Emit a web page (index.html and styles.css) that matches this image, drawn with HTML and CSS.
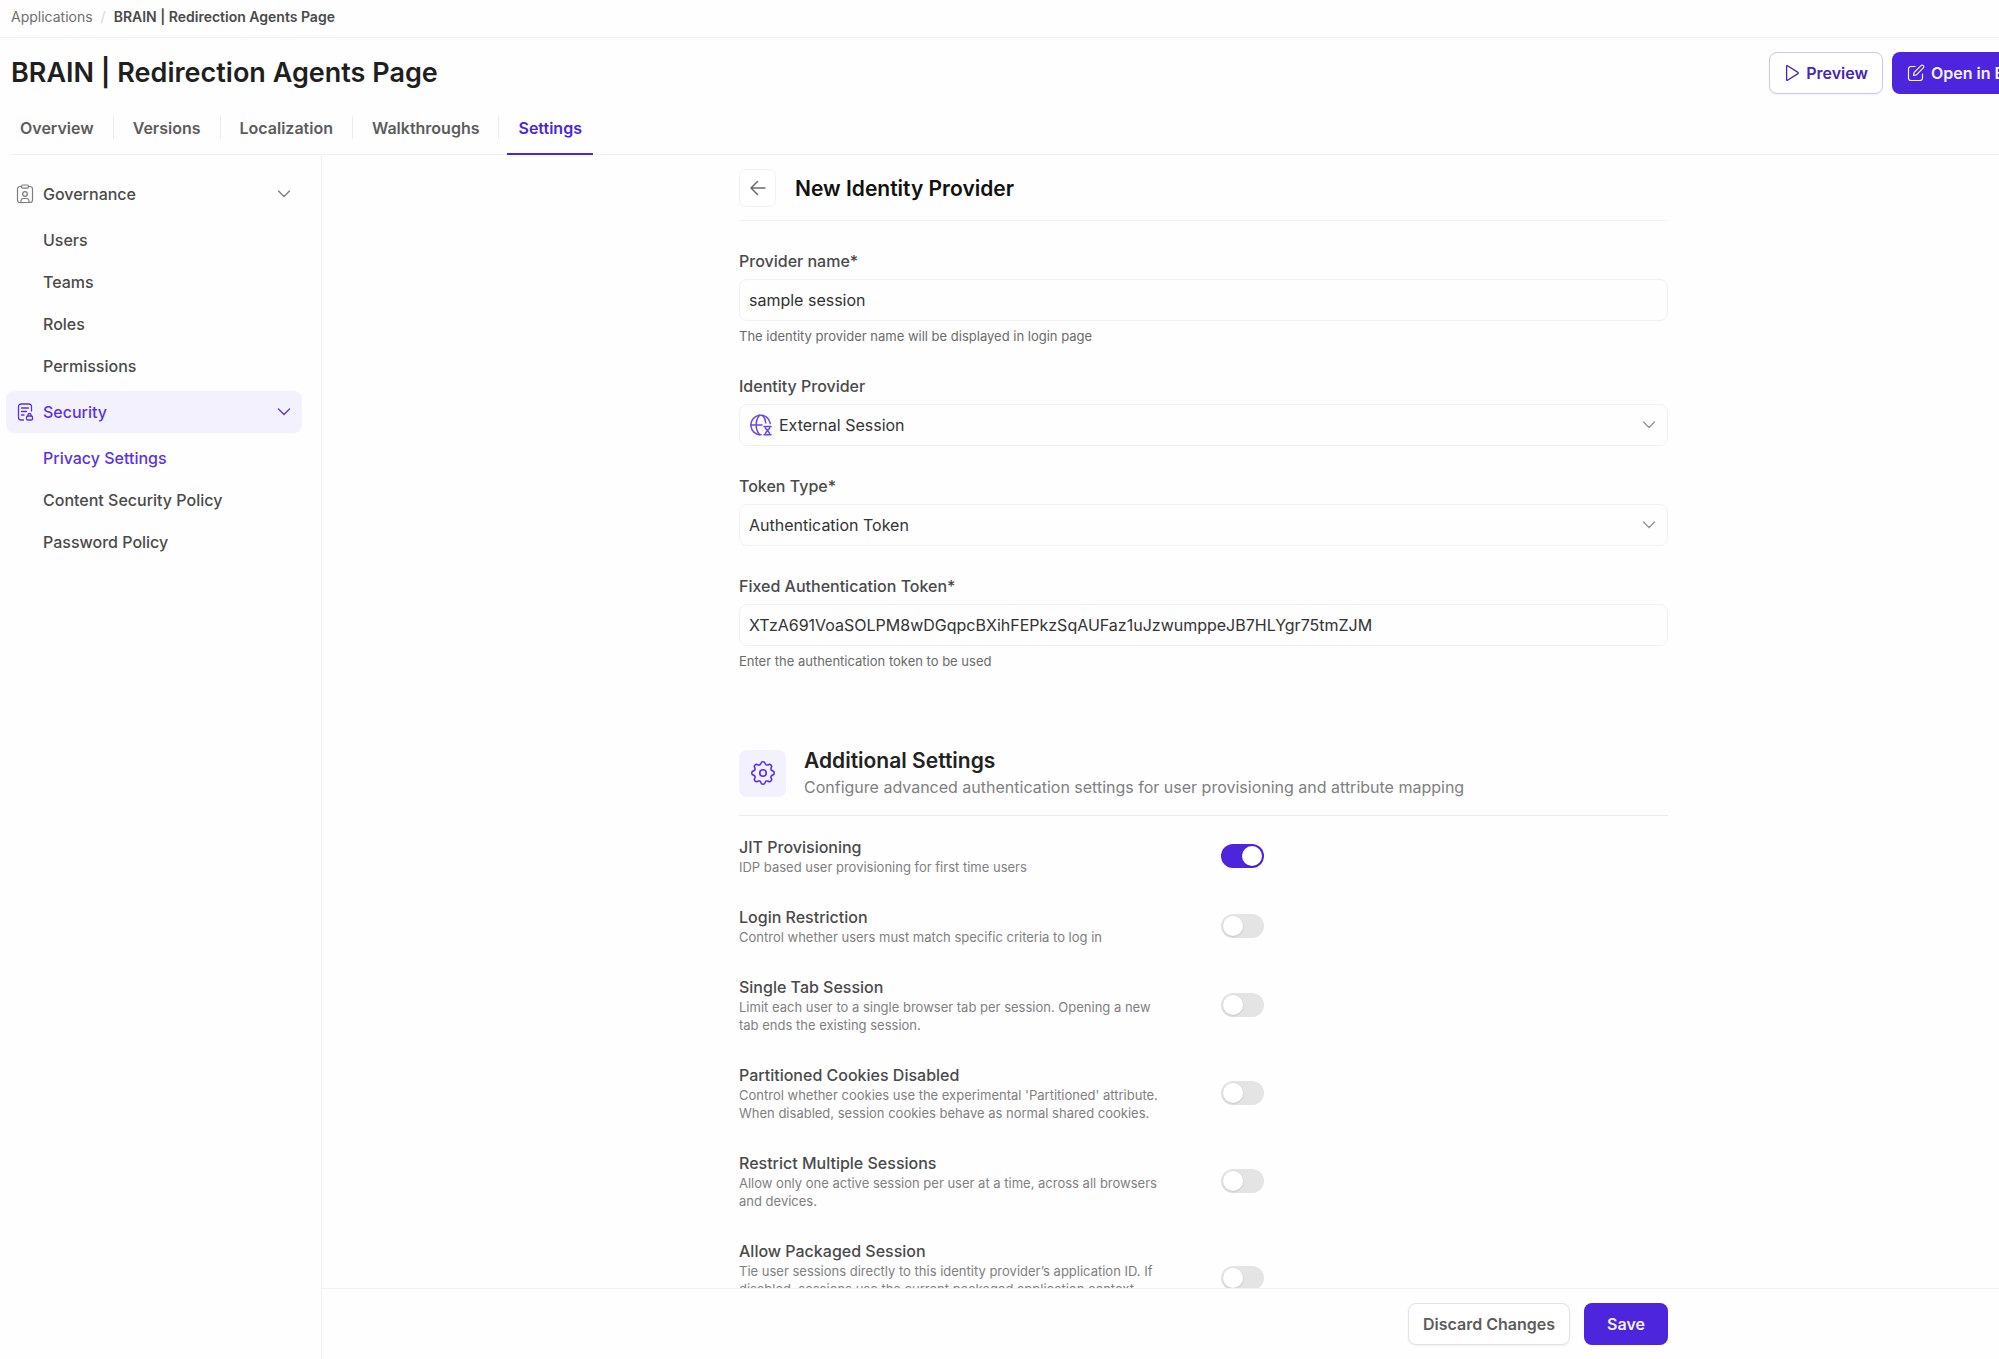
FILE: index.html
```html
<!DOCTYPE html>
<html lang="en">
<head>
    <meta charset="UTF-8">
    <meta name="viewport" content="width=device-width, initial-scale=1.0">
    <title>BRAIN | Redirection Agents Page</title>
    <link rel="stylesheet" href="styles.css">
</head>
<body>
    <div class="app">
        <nav class="breadcrumb" aria-label="Breadcrumb">
            <a href="#">Applications</a>
            <span class="slash">/</span>
            <strong>BRAIN | Redirection Agents Page</strong>
        </nav>

        <header class="page-header">
            <div class="title-row">
                <h1>BRAIN | Redirection Agents Page</h1>
                <div class="actions">
                    <button type="button" class="btn btn-outline">
                        <svg width="16" height="18" viewBox="0 0 16 18" fill="none" stroke="currentColor" stroke-width="1.3" stroke-linejoin="round"><path d="M2.6 2.2v13.6c0 .5.5.7.9.5L14 9.6c.4-.3.4-.9 0-1.2L3.5 1.7c-.4-.2-.9 0-.9.5z"/></svg>
                        Preview
                    </button>
                    <button type="button" class="btn btn-primary">
                        <svg width="18" height="18" viewBox="0 0 18 18" fill="none" stroke="currentColor" stroke-width="1.2" stroke-linecap="round" stroke-linejoin="round"><path d="M8 2.500H4A2.500 2.500 0 0 0 1.500 5v9A2.500 2.500 0 0 0 4 16.500h9a2.500 2.500 0 0 0 2.500-2.500v-4"/><path d="M6.500 11.500l.6-3L14 1.600a1.500 1.500 0 0 1 2.300 2.300L9.400 10.900z"/></svg>
                        Open in Builder
                    </button>
                </div>
            </div>
            <nav class="tabs">
                <a href="#">Overview</a>
                <a href="#">Versions</a>
                <a href="#">Localization</a>
                <a href="#">Walkthroughs</a>
                <a href="#" class="active">Settings</a>
            </nav>
        </header>

        <div class="content">
            <aside class="sidebar">
                <button type="button" class="group">
                    <svg width="18" height="20" viewBox="0 0 18 20" fill="none" stroke="currentColor" stroke-width="1.2" stroke-linecap="round" stroke-linejoin="round"><path d="M5.500 2.500H4A2.500 2.500 0 0 0 1.500 5v11A2.500 2.500 0 0 0 4 18.500h10a2.500 2.500 0 0 0 2.500-2.500V5A2.500 2.500 0 0 0 14 2.500h-1.500"/><rect x="5.500" y="1" width="7" height="3.200" rx="1.400"/><circle cx="9" cy="10" r="2.300"/><path d="M5 18v-1.500a2.500 2.500 0 0 1 2.500-2h3a2.500 2.500 0 0 1 2.500 2V18"/></svg>
                    <span>Governance</span>
                    <svg class="chevron" width="14" height="8" viewBox="0 0 14 8" fill="none" stroke="currentColor" stroke-width="1.3" stroke-linecap="round" stroke-linejoin="round"><path d="M1.500 1L7 6.500 12.500 1"/></svg>
                </button>
                <ul>
                    <li><a href="#">Users</a></li>
                    <li><a href="#">Teams</a></li>
                    <li><a href="#">Roles</a></li>
                    <li><a href="#">Permissions</a></li>
                </ul>
                <button type="button" class="group active">
                    <svg width="18" height="20" viewBox="0 0 18 20" fill="none" stroke="currentColor" stroke-width="1.3" stroke-linecap="round" stroke-linejoin="round"><path d="M15.500 9V4.500A2.500 2.500 0 0 0 13 2H5a2.500 2.500 0 0 0-2.500 2.500v11A2.500 2.500 0 0 0 5 18h2.500"/><path d="M5.500 6h7M5.500 9.500h5M5.500 13h2.500"/><rect x="10.500" y="14" width="6" height="4" rx="1.200"/><path d="M12 14v-1a1.500 1.500 0 0 1 3 0v1"/></svg>
                    <span>Security</span>
                    <svg class="chevron" width="14" height="8" viewBox="0 0 14 8" fill="none" stroke="currentColor" stroke-width="1.3" stroke-linecap="round" stroke-linejoin="round"><path d="M1.500 1L7 6.500 12.500 1"/></svg>
                </button>
                <ul>
                    <li><a href="#" class="active">Privacy Settings</a></li>
                    <li><a href="#">Content Security Policy</a></li>
                    <li><a href="#">Password Policy</a></li>
                </ul>
            </aside>

            <main class="main">
                <form class="scroll" id="providerForm">
                    <div class="column">
                        <div class="form-head">
                            <button type="button" class="back" aria-label="Back">
                                <svg width="18" height="16" viewBox="0 0 18 16" fill="none" stroke="currentColor" stroke-width="1.5" stroke-linecap="round" stroke-linejoin="round"><path d="M16 8H2M8.500 1.500L2 8l6.500 6.500"/></svg>
                            </button>
                            <h2>New Identity Provider</h2>
                        </div>

                        <div class="field">
                            <label for="providerName">Provider name*</label>
                            <input type="text" id="providerName" value="sample session">
                            <p class="hint">The identity provider name will be displayed in login page</p>
                        </div>
                        <div class="field">
                            <label for="identityProvider">Identity Provider</label>
                            <div class="select with-icon">
                                <svg class="lead" width="22" height="22" viewBox="0 0 22 22" fill="none" stroke="currentColor" stroke-width="1.5" stroke-linecap="round" stroke-linejoin="round"><path d="M20.300 9.500A9.800 9.800 0 1 0 11 20.800"/><path d="M1.200 11H12"/><path d="M9.500 1.300C5 7 5 15 9.500 20.700M12.500 1.300c2 2.300 3 4.700 3.300 7.700"/><path d="M14 12.500h7M14 20.800h7M15 12.500c0 3.800 5 4.500 5 8.300M20 12.500c0 3.800-5 4.500-5 8.300"/></svg>
                                <select id="identityProvider">
                                    <option>External Session</option>
                                </select>
                                <svg class="chevron" width="14" height="8" viewBox="0 0 14 8" fill="none" stroke="currentColor" stroke-width="1.5" stroke-linecap="round" stroke-linejoin="round"><path d="M1.500 1L7 6.500 12.500 1"/></svg>
                            </div>
                        </div>
                        <div class="field">
                            <label for="tokenType">Token Type*</label>
                            <div class="select">
                                <select id="tokenType">
                                    <option>Authentication Token</option>
                                </select>
                                <svg class="chevron" width="14" height="8" viewBox="0 0 14 8" fill="none" stroke="currentColor" stroke-width="1.5" stroke-linecap="round" stroke-linejoin="round"><path d="M1.500 1L7 6.500 12.500 1"/></svg>
                            </div>
                        </div>
                        <div class="field">
                            <label for="fixedToken">Fixed Authentication Token*</label>
                            <input type="text" id="fixedToken" value="XTzA691VoaSOLPM8wDGqpcBXihFEPkzSqAUFaz1uJzwumppeJB7HLYgr75tmZJM">
                            <p class="hint">Enter the authentication token to be used</p>
                        </div>

                        <section class="additional">
                            <div class="section-head">
                                <div class="tile">
                                    <svg width="30" height="30" viewBox="0 0 24 24" fill="none" stroke="currentColor" stroke-width="1.3" stroke-linecap="round" stroke-linejoin="round"><path d="M10.325 4.317c.426-1.756 2.924-1.756 3.350 0a1.724 1.724 0 0 0 2.573 1.066c1.543-.94 3.310.826 2.370 2.370a1.724 1.724 0 0 0 1.065 2.572c1.756.426 1.756 2.924 0 3.350a1.724 1.724 0 0 0-1.066 2.573c.94 1.543-.826 3.310-2.370 2.370a1.724 1.724 0 0 0-2.572 1.065c-.426 1.756-2.924 1.756-3.350 0a1.724 1.724 0 0 0-2.573-1.066c-1.543.94-3.310-.826-2.370-2.370a1.724 1.724 0 0 0-1.065-2.572c-1.756-.426-1.756-2.924 0-3.350a1.724 1.724 0 0 0 1.066-2.573c-.94-1.543.826-3.310 2.370-2.370 1 .608 2.296.070 2.572-1.065z"/><circle cx="12" cy="12" r="2.600"/></svg>
                                </div>
                                <div>
                                    <h3>Additional Settings</h3>
                                    <p>Configure advanced authentication settings for user provisioning and attribute mapping</p>
                                </div>
                            </div>

                            <div class="setting">
                                <div class="setting-text">
                                    <label for="jit">JIT Provisioning</label>
                                    <p>IDP based user provisioning for first time users</p>
                                </div>
                                <input type="checkbox" class="toggle" id="jit" checked>
                            </div>
                            <div class="setting">
                                <div class="setting-text">
                                    <label for="loginRestriction">Login Restriction</label>
                                    <p>Control whether users must match specific criteria to log in</p>
                                </div>
                                <input type="checkbox" class="toggle" id="loginRestriction">
                            </div>
                            <div class="setting">
                                <div class="setting-text">
                                    <label for="singleTab">Single Tab Session</label>
                                    <p>Limit each user to a single browser tab per session. Opening a new tab ends the existing session.</p>
                                </div>
                                <input type="checkbox" class="toggle" id="singleTab">
                            </div>
                            <div class="setting">
                                <div class="setting-text">
                                    <label for="partitioned">Partitioned Cookies Disabled</label>
                                    <p>Control whether cookies use the experimental 'Partitioned' attribute. When disabled, session cookies behave as normal shared cookies.</p>
                                </div>
                                <input type="checkbox" class="toggle" id="partitioned">
                            </div>
                            <div class="setting">
                                <div class="setting-text">
                                    <label for="restrictMultiple">Restrict Multiple Sessions</label>
                                    <p>Allow only one active session per user at a time, across all browsers and devices.</p>
                                </div>
                                <input type="checkbox" class="toggle" id="restrictMultiple">
                            </div>
                            <div class="setting">
                                <div class="setting-text">
                                    <label for="packaged">Allow Packaged Session</label>
                                    <p>Tie user sessions directly to this identity provider’s application ID. If disabled, sessions use the current packaged application context instead.</p>
                                </div>
                                <input type="checkbox" class="toggle" id="packaged">
                            </div>
                        </section>
                    </div>
                </form>
                <footer class="footer">
                    <div class="column footer-actions">
                        <button type="reset" form="providerForm" class="btn btn-plain">Discard Changes</button>
                        <button type="submit" form="providerForm" class="btn btn-primary btn-save">Save</button>
                    </div>
                </footer>
            </main>
        </div>
    </div>
</body>
</html>
```
FILE: styles.css
```css
* {
    box-sizing: border-box;
}
body {
    margin: 0;
    overflow: hidden;
    font-family: Inter, "Liberation Sans", sans-serif;
    font-size: 16px;
    color: #4a4a4a;
    background-color: #fefefe;
}
h1, h2, h3, p, ul {
    margin: 0;
    padding: 0;
}
a {
    color: inherit;
    text-decoration: none;
}
button, input, select {
    font: inherit;
    color: inherit;
}
svg {
    flex: none;
}
/* wider than the window, the right edge is cut off */
.app {
    display: flex;
    flex-direction: column;
    width: calc(100% + 86px);
    height: 100vh;
}
.breadcrumb {
    display: flex;
    align-items: center;
    gap: 8px;
    height: 38px;
    padding: 0 11px 5px;
    border-bottom: 1px solid #f3f3f3;
    font-size: 14px;
    color: #6e6e6e;
}
.breadcrumb .slash {
    color: #d8d8d8;
}
.breadcrumb strong {
    font-weight: 600;
    color: #4a4a4a;
}
.page-header {
    padding: 14px 11px 0;
}
.title-row {
    display: flex;
    justify-content: space-between;
    align-items: center;
    height: 42px;
}
h1 {
    padding-bottom: 1px;
    font-size: 27px;
    font-weight: 600;
    color: #1f1f1f;
}
.actions {
    display: flex;
    gap: 9px;
    margin-right: 10px;
}
.btn {
    display: flex;
    align-items: center;
    justify-content: center;
    gap: 6px;
    height: 42px;
    padding: 0 14px;
    border: 1px solid transparent;
    border-radius: 8px;
    font-size: 16px;
    font-weight: 600;
    background-color: #fff;
}
.btn-outline {
    border-color: #cdc5f7;
    color: #4526b5;
    box-shadow: 0 1px 2px rgba(0, 0, 0, 0.05);
}
.btn-primary {
    color: #f3f0ff;
    background-color: #4d25dc;
}
.btn-plain {
    border-color: #e3e3e3;
    color: #5c5c5c;
    box-shadow: 0 1px 2px rgba(0, 0, 0, 0.06);
}
.btn-save {
    width: 84px;
}
.tabs {
    display: flex;
    height: 61px;
    border-bottom: 1px solid #f1f1f1;
}
.tabs a {
    display: flex;
    align-items: center;
    position: relative;
    height: 61px;
    padding: 8px 11px 0;
    margin-left: 17px;
    border-bottom: 2px solid transparent;
    font-weight: 600;
    color: #5c5c5c;
}
.tabs a:first-child {
    margin-left: -2px;
}
/* separator between two tabs */
.tabs a + a::before {
    content: "";
    position: absolute;
    left: -9px;
    top: 22px;
    width: 1px;
    height: 23px;
    background-color: #ececec;
}
.tabs a.active {
    color: #4d25dc;
    border-bottom-color: #4d25dc;
}
.content {
    display: flex;
    flex: 1;
    min-height: 0;
}
.sidebar {
    width: 322px;
    padding: 18px 19px 0 6px;
    border-right: 1px solid #f3f3f3;
    font-weight: 500;
}
.group {
    display: flex;
    align-items: center;
    gap: 9px;
    width: 100%;
    height: 42px;
    padding: 0 11px 0 10px;
    border: 0;
    border-radius: 8px;
    background: none;
    font-weight: 500;
    color: #4a4a4a;
}
.group svg {
    color: #7d7d7d;
}
.group span {
    flex: 1;
    text-align: left;
}
.group.active {
    background-color: #f3f1fe;
}
.group.active, .group.active svg, .sidebar a.active {
    color: #5a32e6;
}
.sidebar ul {
    padding: 4px 0;
    list-style: none;
}
.sidebar li a {
    display: flex;
    align-items: center;
    height: 42px;
    padding-left: 37px;
}
.main {
    display: flex;
    flex-direction: column;
    flex: 1;
    min-width: 0;
}
.scroll {
    flex: 1;
    min-height: 0;
    overflow: hidden;
}
.column {
    max-width: 929px;
    margin: 0 auto;
}
.form-head {
    display: flex;
    align-items: center;
    gap: 19px;
    padding: 14px 0 13px;
    margin-bottom: 30px;
    border-bottom: 1px solid #f1f1f1;
}
.back {
    display: flex;
    align-items: center;
    justify-content: center;
    width: 37px;
    height: 38px;
    padding: 0;
    border: 1px solid #f1f1f1;
    border-radius: 7px;
    background-color: #fff;
    color: #6b6b6b;
}
h2 {
    font-size: 21px;
    font-weight: 600;
    color: #111;
}
.field {
    margin-bottom: 30px;
}
.field label {
    display: block;
    height: 28px;
    line-height: 20px;
    font-weight: 500;
}
.field input, .field select {
    width: 100%;
    height: 42px;
    padding: 0 9px;
    border: 1px solid #f1f1f1;
    border-radius: 8px;
    background-color: transparent;
    color: #333;
    appearance: none;
}
.select {
    display: grid;
    align-items: center;
}
.select > * {
    grid-area: 1 / 1;
}
.select .chevron {
    justify-self: end;
    margin-right: 12px;
    color: #999;
    pointer-events: none;
}
.select .lead {
    margin-left: 11px;
    color: #6a45ea;
    pointer-events: none;
}
.with-icon select {
    padding-left: 39px;
}
.hint {
    padding-top: 6px;
    font-size: 13px;
    line-height: 19px;
    color: #6b6b6b;
}
.additional {
    padding-top: 46px;
}
.section-head {
    display: flex;
    align-items: center;
    gap: 18px;
    padding-bottom: 16px;
    margin-bottom: 20px;
    border-bottom: 1px solid #ebebeb;
}
.tile {
    display: flex;
    align-items: center;
    justify-content: center;
    width: 47px;
    height: 47px;
    border-radius: 8px;
    background-color: #f3f1fe;
    color: #5a32e6;
}
h3 {
    font-size: 21px;
    line-height: 28px;
    font-weight: 600;
    color: #222;
}
.section-head p {
    line-height: 24px;
    color: #808080;
}
.setting {
    display: flex;
    align-items: center;
    gap: 52px;
    margin-bottom: 30px;
}
.setting-text {
    width: 430px;
}
.setting label {
    display: block;
    line-height: 22px;
    font-weight: 500;
}
.setting p {
    font-size: 13px;
    line-height: 18px;
    color: #808080;
}
.toggle {
    display: flex;
    align-items: center;
    width: 43px;
    height: 24px;
    margin: 0;
    padding: 2px;
    border-radius: 12px;
    background-color: #e4e4e4;
    appearance: none;
}
.toggle::before {
    content: "";
    width: 20px;
    height: 20px;
    border-radius: 50%;
    background-color: #fff;
    box-shadow: 0 1px 2px rgba(0, 0, 0, 0.15);
}
.toggle:checked {
    justify-content: flex-end;
    background-color: #4d25dc;
}
.footer {
    height: 71px;
    padding-top: 14px;
    border-top: 1px solid #f1f1f1;
}
.footer-actions {
    display: flex;
    justify-content: flex-end;
    gap: 14px;
}
```
